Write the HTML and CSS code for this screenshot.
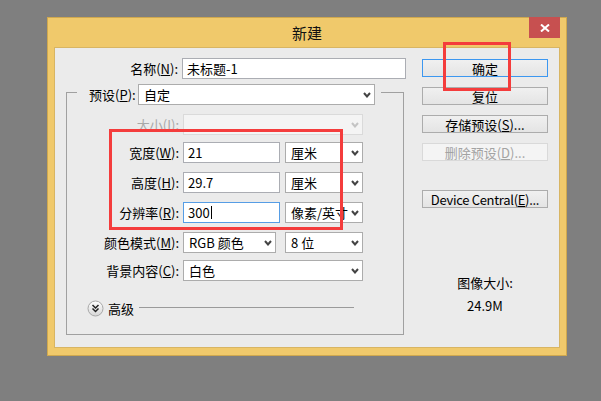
FILE: index.html
```html
<!DOCTYPE html>
<html lang="zh-CN">
<head>
  <meta charset="UTF-8" />
  <title>新建</title>
  <link rel="stylesheet" href="styles.css">
</head>
<body>
  <div class="dialog">
    <div class="titlebar">
      <span class="title">新建</span>
      <div class="close">
        <svg width="10" height="8" viewBox="0 0 10 8"><path d="M1 0.5 L9 7.5 M9 0.5 L1 7.5" stroke="#fff" stroke-width="2" fill="none"/></svg>
      </div>
    </div>

    <div class="client">
      <div class="main">
        <div class="row row-name">
          <span class="lbl lbl-name">名称(<u>N</u>):</span>
          <div class="field w-name">未标题-1</div>
        </div>

        <div class="group">
          <div class="group-head">
            <span class="lbl lbl-preset">预设(<u>P</u>):</span>
            <div class="select w-preset">自定<svg class="arrow" width="8" height="6" viewBox="0 0 8 6"><path d="M1 1 L4 4.5 L7 1"/></svg></div>
          </div>

          <div class="row r-size">
            <span class="lbl off">大小(<u>I</u>):</span>
            <div class="select off w-wide"><svg class="arrow" width="8" height="6" viewBox="0 0 8 6"><path d="M1 1 L4 4.5 L7 1"/></svg></div>
          </div>
          <div class="row r-width">
            <span class="lbl">宽度(<u>W</u>):</span>
            <div class="field w-num">21</div>
            <div class="select w-unit">厘米<svg class="arrow" width="8" height="6" viewBox="0 0 8 6"><path d="M1 1 L4 4.5 L7 1"/></svg></div>
          </div>
          <div class="row r-gap">
            <span class="lbl">高度(<u>H</u>):</span>
            <div class="field w-num">29.7</div>
            <div class="select w-unit">厘米<svg class="arrow" width="8" height="6" viewBox="0 0 8 6"><path d="M1 1 L4 4.5 L7 1"/></svg></div>
          </div>
          <div class="row r-gap">
            <span class="lbl">分辨率(<u>R</u>):</span>
            <div class="field w-num focus">300<span class="caret"></span></div>
            <div class="select w-unit">像素/英寸<svg class="arrow" width="8" height="6" viewBox="0 0 8 6"><path d="M1 1 L4 4.5 L7 1"/></svg></div>
          </div>
          <div class="row r-gap">
            <span class="lbl">颜色模式(<u>M</u>):</span>
            <div class="select w-mode">RGB 颜色<svg class="arrow" width="8" height="6" viewBox="0 0 8 6"><path d="M1 1 L4 4.5 L7 1"/></svg></div>
            <div class="select w-unit bits">8 位<svg class="arrow" width="8" height="6" viewBox="0 0 8 6"><path d="M1 1 L4 4.5 L7 1"/></svg></div>
          </div>
          <div class="row r-bg">
            <span class="lbl">背景内容(<u>C</u>):</span>
            <div class="select w-wide">白色<svg class="arrow" width="8" height="6" viewBox="0 0 8 6"><path d="M1 1 L4 4.5 L7 1"/></svg></div>
          </div>

          <div class="advanced">
            <svg class="adv-btn" width="17" height="17" viewBox="0 0 17 17">
              <defs>
                <linearGradient id="advg" x1="0" y1="0" x2="0" y2="1">
                  <stop offset="0" stop-color="#ffffff"/>
                  <stop offset="1" stop-color="#d6d6d6"/>
                </linearGradient>
              </defs>
              <circle cx="8.5" cy="8.5" r="7.5" fill="url(#advg)" stroke="#a8a8a8"/>
              <path d="M5.5 5 L8.5 8 L11.5 5 M5.5 8.5 L8.5 11.5 L11.5 8.5" stroke="#222" stroke-width="1.5" fill="none"/>
            </svg>
            <span class="adv-text">高级</span>
            <span class="adv-line"></span>
          </div>
        </div>
      </div>

      <div class="side">
        <div class="btn default">确定</div>
        <div class="btn">复位</div>
        <div class="btn">存储预设(<u>S</u>)...</div>
        <div class="btn off">删除预设(<u>D</u>)...</div>
        <div class="btn device">Device Central(<u>E</u>)...</div>
        <div class="info">图像大小:</div>
        <div class="info info-value">24.9M</div>
      </div>
    </div>

    <div class="mark mark-ok"></div>
    <div class="mark mark-dims"></div>
  </div>
</body>
</html>
```

FILE: styles.css
```css
* {
  box-sizing: border-box;
}

body {
  margin: 0;
  padding: 17px 0 0 47px;
  background: #7f7f7f;
  font-family: "Noto Sans CJK SC", "Noto Sans", sans-serif;
  font-size: 13px;
  color: #000;
  height: 401px;
  overflow: hidden;
}

u {
  text-underline-offset: 1px;
}

.dialog {
  position: relative;
  width: 520px;
  height: 339px;
  background: #f0c96b;
  border: 1px solid #cfa84f;
  padding: 0 6px 7px 6px;
  display: flex;
  flex-direction: column;
}

.titlebar {
  position: relative;
  height: 29px;
  display: flex;
  align-items: center;
  justify-content: center;
}

.title {
  font-size: 15px;
  color: #111;
}

.close {
  position: absolute;
  top: -1px;
  right: 0;
  width: 31px;
  height: 21px;
  background: #c75050;
  display: flex;
  align-items: center;
  justify-content: center;
}

.client {
  flex: 1;
  display: flex;
  background: #ebebeb;
  border: 1px solid #d8b563;
}

.main {
  width: 355px;
  flex: none;
}

/* rows */
.row {
  display: flex;
  align-items: center;
  gap: 4px;
  height: 21px;
}

.lbl {
  flex: none;
  width: 112px;
  text-align: right;
  white-space: nowrap;
}

.lbl.off {
  color: #a8a8a8;
}

.row-name {
  margin: 10px 0 0 12px;
}

.lbl-name {
  width: 111px;
}

.field,
.select {
  flex: none;
  height: 21px;
  display: flex;
  align-items: center;
  background: #fff;
  white-space: nowrap;
  overflow: hidden;
}

.field {
  border: 1px solid #abadb3;
  padding-left: 4px;
}

.field.focus {
  border-color: #569de5;
}

.caret {
  display: inline-block;
  width: 1px;
  height: 13px;
  margin-left: 1px;
  background: #000;
}

.select {
  border: 1px solid #acacac;
  justify-content: space-between;
  padding: 0 3px 0 5px;
}

.select.off {
  background: #f4f4f4;
  border-color: #dadada;
}

.arrow {
  flex: none;
  margin-left: auto;
}

.arrow path {
  fill: none;
  stroke: #444;
  stroke-width: 2;
}

.select.off .arrow path {
  stroke: #c4c4c4;
}

.w-name { width: 224px; }
.w-preset { width: 237px; }
.w-wide { width: 180px; }
.w-num { width: 97px; }
.w-unit { width: 78px; margin-left: 1px; }
.w-mode { width: 93px; }
.bits { margin-left: 5px; }

/* group box */
.group {
  margin: 13px 0 0 11px;
  width: 338px;
  border: 1px solid #a0a0a0;
  padding-bottom: 17px;
}

.group-head {
  display: flex;
  align-items: center;
  gap: 4px;
  width: fit-content;
  margin: -9px 0 0 10px;
  padding: 0 6px 0 12px;
  background: #ebebeb;
}

.lbl-preset {
  width: 45px;
}

.r-size { margin-top: 9px; }
.r-width { margin-top: 7px; }
.r-gap { margin-top: 9px; }
.r-bg { margin-top: 7px; }

.advanced {
  display: flex;
  align-items: center;
  height: 17px;
  margin: 19px 49px 0 0;
  padding-left: 20px;
}

.adv-btn {
  flex: none;
}

.adv-text {
  margin-left: 4px;
}

.adv-line {
  flex: 1;
  height: 1px;
  margin: -2px 0 0 5px;
  background: #9a9a9a;
}

/* right column */
.side {
  width: 126px;
  margin-left: 12px;
  padding-top: 11px;
  display: flex;
  flex-direction: column;
  gap: 10px;
}

.btn {
  height: 18px;
  border: 1px solid #acacac;
  background: linear-gradient(#f0f0f0, #e4e4e4);
  display: flex;
  align-items: center;
  justify-content: center;
  white-space: nowrap;
}

.btn.default {
  border-color: #3c97f0;
}

.btn.off {
  color: #a3a3a3;
  border-color: #d9d9d9;
  background: #f4f4f4;
}

.device {
  margin-top: 19px;
  letter-spacing: -0.3px;
}

.info {
  margin-top: 56px;
  text-align: center;
  line-height: 17px;
}

.info-value {
  margin-top: -4px;
}

/* red annotation boxes */
.mark {
  position: absolute;
  border: 3px solid #f43c3c;
}

.mark-ok {
  left: 395px;
  top: 24px;
  width: 68px;
  height: 49px;
}

.mark-dims {
  left: 61px;
  top: 111px;
  width: 234px;
  height: 101px;
}
```
